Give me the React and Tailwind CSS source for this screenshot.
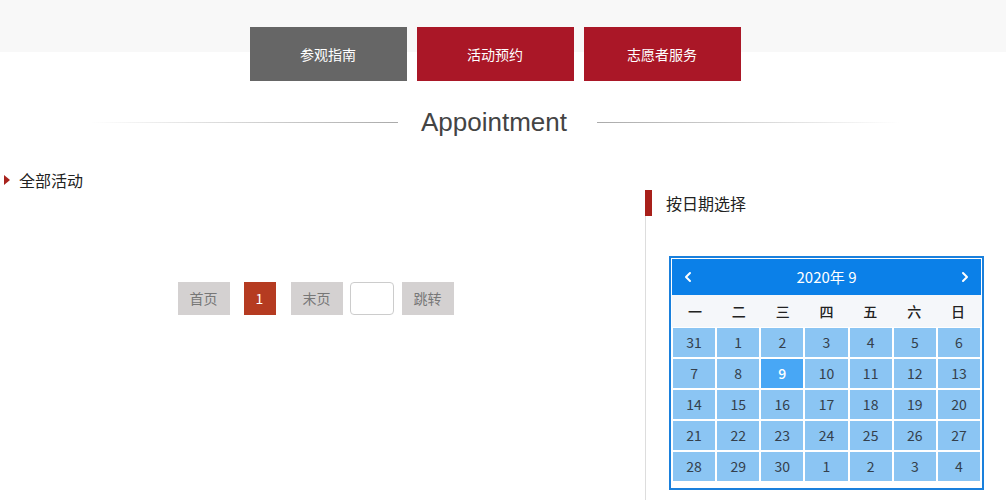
import React from "react";
import { ChevronLeft, ChevronRight } from "lucide-react";

const tabs = [
  { label: "参观指南", active: true },
  { label: "活动预约" },
  { label: "志愿者服务" },
];

const weekdays = ["一", "二", "三", "四", "五", "六", "日"];

const days = [
  31, 1, 2, 3, 4, 5, 6,
  7, 8, 9, 10, 11, 12, 13,
  14, 15, 16, 17, 18, 19, 20,
  21, 22, 23, 24, 25, 26, 27,
  28, 29, 30, 1, 2, 3, 4,
];

const font = "font-['Microsoft_YaHei','Noto_Sans_CJK_SC',sans-serif]";

const Calendar = () => {
  return (
    <div className="w-[315px] border-2 border-[#1a80dc] bg-white p-px">
      <div className="flex h-[36px] items-center justify-between bg-[#0b80e8] px-[8px] text-white">
        <ChevronLeft size={16} strokeWidth={3} />
        <span className="text-[15px]">2020年 9</span>
        <ChevronRight size={16} strokeWidth={3} />
      </div>
      <div className="grid h-[32px] grid-cols-7 items-center bg-[#f5f7fa] px-px text-center text-[14px] font-medium text-[#222]">
        {weekdays.map((w) => (
          <span key={w}>{w}</span>
        ))}
      </div>
      <div className="grid grid-cols-7 gap-[2px] px-px pt-px pb-[6px]">
        {days.map((d, i) => (
          <div
            key={i}
            className={
              i === 9
                ? "flex h-[29px] items-center justify-center bg-[#48a7f5] text-[14px] font-medium text-white"
                : "flex h-[29px] items-center justify-center bg-[#8bc5f3] text-[14px] text-[#34404c]"
            }
          >
            {d}
          </div>
        ))}
      </div>
    </div>
  );
};

const Pager = () => {
  return (
    <div className="mt-[90px] flex items-center justify-center text-[14px]">
      <span className="flex h-[33px] w-[52px] items-center justify-center bg-[#d4d1d1] text-[#777]">首页</span>
      <span className="ml-[14px] flex h-[33px] w-[32px] items-center justify-center bg-[#b53b21] text-white">1</span>
      <span className="ml-[15px] flex h-[33px] w-[52px] items-center justify-center bg-[#d4d1d1] text-[#777]">末页</span>
      <input className="ml-[7px] h-[33px] w-[44px] rounded-[4px] border border-[#ccc] bg-white" />
      <span className="ml-[8px] flex h-[33px] w-[52px] items-center justify-center bg-[#d4d1d1] text-[#777]">跳转</span>
    </div>
  );
};

export default function App() {
  return (
    <div className={`${font} h-[500px] w-[1006px] overflow-hidden bg-[linear-gradient(#f8f8f8_52px,#ffffff_52px)]`}>
      <div className="w-[990px]">
        <div className="flex justify-center gap-[10px] pt-[27px]">
          {tabs.map((t) => (
            <div
              key={t.label}
              className={`flex h-[54px] w-[157px] items-center justify-center text-[14px] text-white ${
                t.active ? "bg-[#666666]" : "bg-[#aa1727]"
              }`}
            >
              {t.label}
            </div>
          ))}
        </div>

        <div className="mt-[26px] flex items-center justify-center">
          <div className="h-px w-[308px] bg-[linear-gradient(to_right,rgba(170,170,170,0),#aaaaaa)]" />
          <h1 className="ml-[23px] mr-[30px] font-['Liberation_Sans',Arial,sans-serif] text-[26px] leading-[30px] text-[#444]">
            Appointment
          </h1>
          <div className="h-px w-[303px] bg-[linear-gradient(to_right,#aaaaaa,rgba(170,170,170,0))]" />
        </div>

        <div className="mt-[23px] flex">
          <div className="w-[631px] pt-[8px]">
            <div className="flex h-[24px] items-center pl-[4px]">
              <span className="h-0 w-0 border-y-[5px] border-l-[6px] border-y-transparent border-l-[#a8231d]" />
              <span className="ml-[9px] text-[16px] text-[#222]">全部活动</span>
            </div>
            <Pager />
          </div>

          <div className="ml-[14px] pt-[30px]">
            <div className="flex h-[26px] items-center border-l-[7px] border-[#a8201a] pl-[14px] text-[16px] text-[#222]">
              按日期选择
            </div>
            <div className="h-[400px] border-l border-[#ddd] pl-[23px] pt-[40px]">
              <Calendar />
            </div>
          </div>
        </div>
      </div>
    </div>
  );
}
